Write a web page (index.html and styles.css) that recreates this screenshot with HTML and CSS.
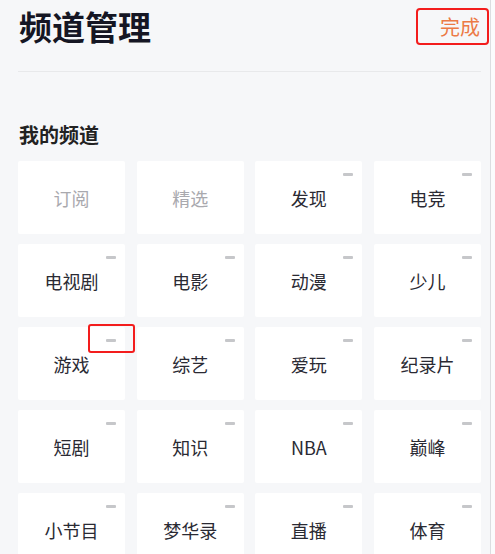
FILE: index.html
```html
<!DOCTYPE html>
<html lang="zh-CN">
<head>
    <meta charset="UTF-8">
    <meta name="viewport" content="width=device-width, initial-scale=1.0">
    <title>频道管理</title>
    <link rel="stylesheet" href="styles.css">
</head>
<body>
    <div class="page">
        <div class="header">
            <h1 class="title">频道管理</h1>
            <div class="done">完成</div>
        </div>
        <div class="divider"></div>

        <h2 class="section-title">我的频道</h2>

        <div class="channel-grid">
            <div class="channel fixed">订阅</div>
            <div class="channel fixed">精选</div>
            <div class="channel">发现<span class="remove"></span></div>
            <div class="channel">电竞<span class="remove"></span></div>

            <div class="channel">电视剧<span class="remove"></span></div>
            <div class="channel">电影<span class="remove"></span></div>
            <div class="channel">动漫<span class="remove"></span></div>
            <div class="channel">少儿<span class="remove"></span></div>

            <!-- highlighted remove button -->
            <div class="channel">游戏<span class="remove"></span><span class="mark"></span></div>
            <div class="channel">综艺<span class="remove"></span></div>
            <div class="channel">爱玩<span class="remove"></span></div>
            <div class="channel">纪录片<span class="remove"></span></div>

            <div class="channel">短剧<span class="remove"></span></div>
            <div class="channel">知识<span class="remove"></span></div>
            <div class="channel">NBA<span class="remove"></span></div>
            <div class="channel">巅峰<span class="remove"></span></div>

            <div class="channel">小节目<span class="remove"></span></div>
            <div class="channel">梦华录<span class="remove"></span></div>
            <div class="channel">直播<span class="remove"></span></div>
            <div class="channel">体育<span class="remove"></span></div>
        </div>
    </div>
</body>
</html>
```

FILE: styles.css
```css
body {
    margin: 0;
    background-color: #fbfbfc;
    font-family: "Noto Sans CJK SC", "Noto Sans", sans-serif;
    color: #1f1f2a;
}
.page {
    width: 490px;
    height: 554px;
    overflow: hidden;
    background-color: #f6f7f9;
    border-right: 1px solid #dcdde0;
}
.header {
    display: flex;
    justify-content: space-between;
    align-items: center;
    height: 37px;
    padding: 8px 1px 0 19px;
}
.title {
    margin: 0;
    font-size: 33px;
    line-height: 37px;
    font-weight: 700;
    color: #151624;
}
.done {
    box-sizing: border-box;
    width: 73px;
    height: 37px;
    padding-right: 7px;
    border: 2px solid #f31d1d;
    border-radius: 4px;
    text-align: right;
    font-size: 20px;
    line-height: 33px;
    color: #ec7a45;
}
.divider {
    height: 1px;
    margin: 26px 9px 0 18px;
    background-color: #e8e9eb;
}
.section-title {
    margin: 51px 0 0 19px;
    font-size: 20px;
    line-height: 24px;
    font-weight: 600;
    color: #222;
}
.channel-grid {
    display: grid;
    grid-template-columns: repeat(4, 1fr);
    grid-auto-rows: 73px;
    column-gap: 11.5px;
    row-gap: 10px;
    width: 463px;
    margin: 14px 0 0 18px;
}
.channel {
    position: relative;
    display: flex;
    align-items: center;
    justify-content: center;
    background-color: #fff;
    border-radius: 2px;
    font-size: 18px;
    color: #2a2a33;
}
.channel.fixed {
    color: #a9a9ae;
}
.remove {
    position: absolute;
    top: 12px;
    right: 9px;
    width: 10px;
    height: 3px;
    border-radius: 1px;
    background-color: #c6c7ca;
}
.mark {
    position: absolute;
    top: -3px;
    left: 70px;
    width: 47px;
    height: 29px;
    box-sizing: border-box;
    border: 2px solid #f31d1d;
    border-radius: 3px;
}
```
